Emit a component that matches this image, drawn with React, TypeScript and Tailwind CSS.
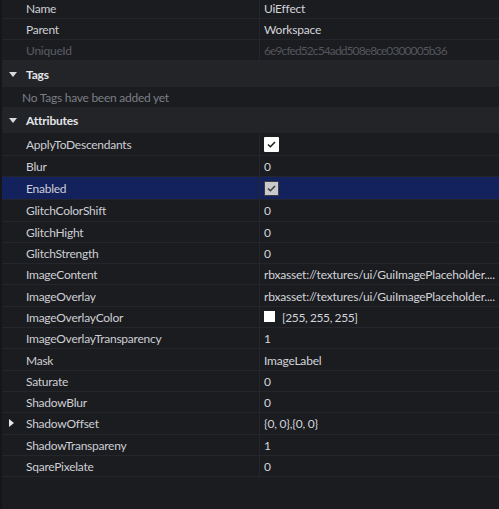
import React from "react";

type Prop = {
  name: string;
  value?: React.ReactNode;
  kind?: "text" | "check" | "checkGray" | "color";
  expandable?: boolean;
  selected?: boolean;
};

const font = { fontFamily: "Lato, 'Liberation Sans', sans-serif" };

const attributes: Prop[] = [
  { name: "ApplyToDescendants", kind: "check" },
  { name: "Blur", value: "0" },
  { name: "Enabled", kind: "checkGray", selected: true },
  { name: "GlitchColorShift", value: "0" },
  { name: "GlitchHight", value: "0" },
  { name: "GlitchStrength", value: "0" },
  { name: "ImageContent", value: "rbxasset://textures/ui/GuiImagePlaceholder...." },
  { name: "ImageOverlay", value: "rbxasset://textures/ui/GuiImagePlaceholder...." },
  { name: "ImageOverlayColor", value: "[255, 255, 255]", kind: "color" },
  { name: "ImageOverlayTransparency", value: "1" },
  { name: "Mask", value: "ImageLabel" },
  { name: "Saturate", value: "0" },
  { name: "ShadowBlur", value: "0" },
  { name: "ShadowOffset", value: "{0, 0},{0, 0}", expandable: true },
  { name: "ShadowTranspareny", value: "1" },
  { name: "SqarePixelate", value: "0" },
];

function DownArrow() {
  return (
    <svg width="8" height="5" viewBox="0 0 8 5" className="ml-[7px]">
      <path d="M0 0 L8 0 L4 5 Z" fill="#d9d9dc" />
    </svg>
  );
}

function RightArrow() {
  return (
    <svg width="5" height="8" viewBox="0 0 5 8" className="ml-[7px]">
      <path d="M0 0 L5 4 L0 8 Z" fill="#e6e6e8" />
    </svg>
  );
}

function Check({ gray }: { gray?: boolean }) {
  return (
    <div
      className={`w-[15px] h-[15px] rounded-[1px] flex items-center justify-center ${
        gray ? "bg-[#c9c9cc] border border-[#3c3d42]" : "bg-white"
      }`}
    >
      <svg width="9" height="7" viewBox="0 0 9 7">
        <path
          d="M1 3.5 L3.4 5.8 L8 1"
          fill="none"
          stroke={gray ? "#3a3a3e" : "#1b1b1d"}
          strokeWidth="1.5"
        />
      </svg>
    </div>
  );
}

function Row({ p, h, dim }: { p: Prop; h: string; dim?: boolean }) {
  const tall = p.kind === "check" || p.kind === "checkGray";
  return (
    <div
      className={`flex border-b border-[#25262b] ${tall ? "h-[23px]" : h} ${
        p.selected ? "bg-[#13215d]" : ""
      }`}
    >
      <div className="w-[258px] shrink-0 flex items-center border-r border-[#25262b]">
        <div className="w-[24px] shrink-0 flex items-center">
          {p.expandable && <RightArrow />}
        </div>
        <span className={`pt-[2px] tracking-[-0.25px] ${dim ? "text-[#5b5d64]" : "text-[#cdcfd4]"}`}>
          {p.name}
        </span>
      </div>
      <div
        className={`flex-1 min-w-0 flex items-center pl-[4px] overflow-hidden whitespace-nowrap ${
          dim ? "tracking-[-0.9px]" : "tracking-[-0.2px]"
        }`}
      >
        {p.kind === "check" && <Check />}
        {p.kind === "checkGray" && <Check gray />}
        {p.kind === "color" && (
          <>
            <div className="w-[11px] h-[11px] bg-white shrink-0 mr-[7px]" />
            <span className="pt-[2px] tracking-[-0.4px] text-[#d2d4d9]">{p.value}</span>
          </>
        )}
        {(!p.kind || p.kind === "text") && (
          <span className={`pt-[2px] ${dim ? "text-[#53555c]" : "text-[#d2d4d9]"}`}>{p.value}</span>
        )}
      </div>
    </div>
  );
}

function Header({ title }: { title: string }) {
  return (
    <div className="flex items-center h-[26px] bg-[#232428]">
      <div className="w-[24px] shrink-0 flex items-center">
        <DownArrow />
      </div>
      <span className="pt-[1px] font-bold tracking-[-0.2px] text-[#e4e5e8]">{title}</span>
    </div>
  );
}

export default function App() {
  return (
    <div
      className="w-[499px] h-[509px] bg-[#1b1c20] border-l-2 border-[#151619] overflow-hidden text-[12px]"
      style={font}
    >
      <div className="-mt-[2px]">
        <Row p={{ name: "Name", value: "UiEffect" }} h="h-[21px]" />
        <Row p={{ name: "Parent", value: "Workspace" }} h="h-[21px]" />
        <Row p={{ name: "UniqueId", value: "6e9cfed52c54add508e8ce0300005b36" }} h="h-[21px]" dim />
      </div>
      <Header title="Tags" />
      <div className="h-[20px] flex items-center pl-[20px] pt-[1px] tracking-[-0.25px] text-[#7b7e85]">
        No Tags have been added yet
      </div>
      <Header title="Attributes" />
      {attributes.map((a) => (
        <Row key={a.name} p={a} h="h-[21.3px]" />
      ))}
    </div>
  );
}
